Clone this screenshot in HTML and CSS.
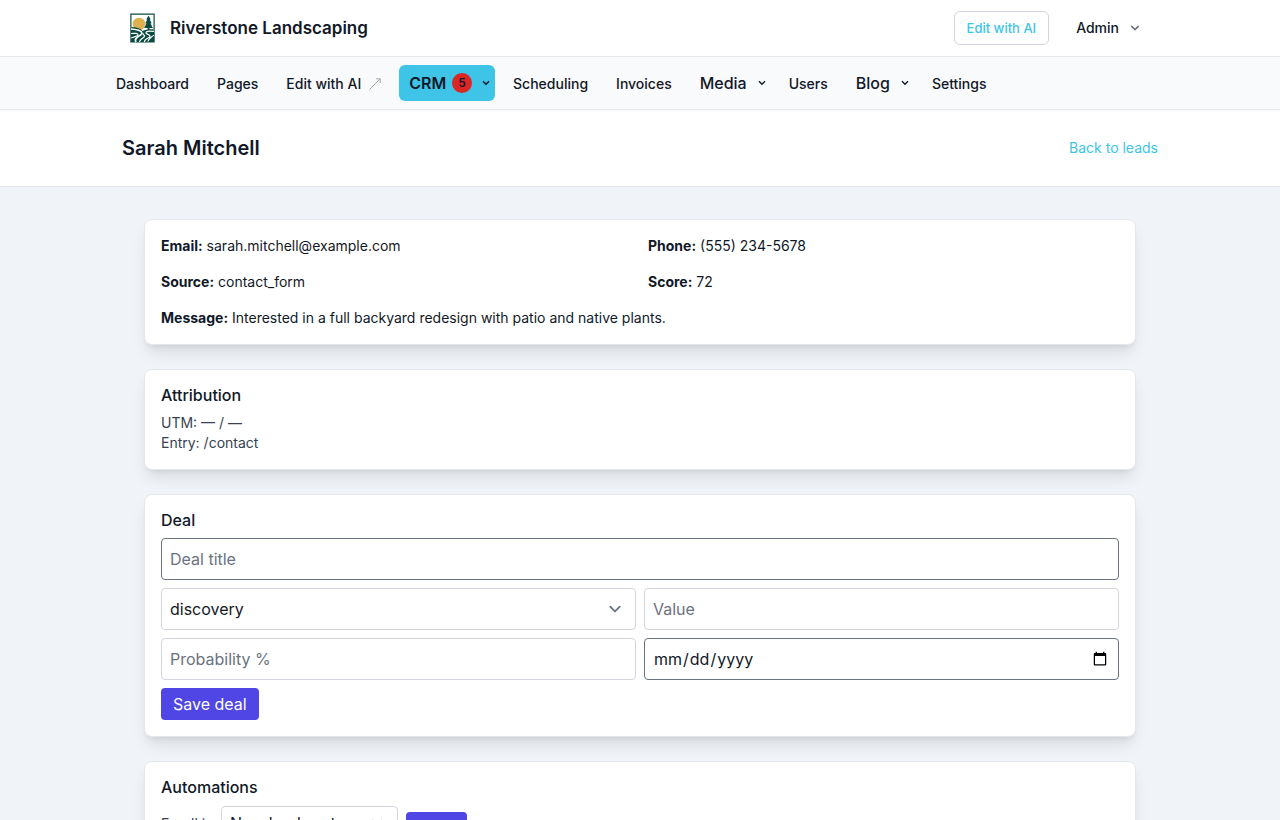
FILE: index.html
```html
<!DOCTYPE html>
<html lang="en">
<head>
    <meta charset="UTF-8">
    <meta name="viewport" content="width=device-width, initial-scale=1.0">
    <title>Sarah Mitchell - Riverstone Landscaping</title>
    <link rel="stylesheet" href="styles.css">
</head>
<body>
    <header class="topbar">
        <div class="brand">
            <svg class="logo" viewBox="0 0 25 30" width="25" height="30">
                <rect x=".3" y=".5" width="24.400" height="29" fill="#0b4a40"/>
                <path d="M1.500 1.700h22v17c-7 1-15-1-22-4z" fill="#fff"/>
                <circle cx="9" cy="11" r="6.300" fill="#deb04f"/>
                <path d="M1.500 14c5 0 9 1.500 11 4 3-1.500 7-2 11-1.500V29h-22z" fill="#0b4a40"/>
                <path d="M18.500 2.500l-2.200 4h1l-2 3.800h1.200l-2.300 4.700h3.400v4h1.800v-4h3.400l-2.300-4.700h1.200l-2-3.800h1z" fill="#0b4a40"/>
                <path d="M1 16c5 .3 9 1.500 10.500 3 1.500 2-2 3.500-4.500 5.500-2 1.500-2 3-1 4.500" fill="none" stroke="#fff" stroke-width="1.600"/>
                <path d="M1 20.500c4-.5 7 0 7 1.200S4.500 24 1 25M24 18.500c-5-.8-8.500 0-8 1.500s4.500 1.500 4 3.500-6 2-5.500 5.500M13 20c-1 2 3 2 1 4s-4 2-4.500 5M24 22.500c-1.500 0-2 1-3 2s-3 2-3 4" fill="none" stroke="#fff" stroke-width="1.200"/>
            </svg>
            <span class="brand-name">Riverstone Landscaping</span>
        </div>
        <div class="account">
            <a href="#" class="ai-button">Edit with AI</a>
            <button class="admin">Admin
                <svg width="16" height="16" viewBox="0 0 20 20" fill="#6b7280"><path d="M5.293 7.293a1 1 0 011.414 0L10 10.586l3.293-3.293a1 1 0 111.414 1.414l-4 4a1 1 0 01-1.414 0l-4-4a1 1 0 010-1.414z"/></svg>
            </button>
        </div>
    </header>

    <nav class="nav">
        <a href="#">Dashboard</a>
        <a href="#">Pages</a>
        <a href="#" class="external">Edit with AI
            <svg width="12" height="12" viewBox="0 0 12 12" fill="none" stroke="#8b929c" stroke-width=".8"><path d="M.5 11.500L11 1M7 .8h4.200V5"/></svg>
        </a>
        <a href="#" class="menu active">CRM <span class="badge">5</span>
            <svg width="8" height="6" viewBox="0 0 8 6"><path d="M1 1.300l3 3 3-3"/></svg>
        </a>
        <a href="#" class="scheduling">Scheduling</a>
        <a href="#">Invoices</a>
        <a href="#" class="menu">Media
            <svg width="8" height="6" viewBox="0 0 8 6"><path d="M1 1.300l3 3 3-3"/></svg>
        </a>
        <a href="#">Users</a>
        <a href="#" class="menu">Blog
            <svg width="8" height="6" viewBox="0 0 8 6"><path d="M1 1.300l3 3 3-3"/></svg>
        </a>
        <a href="#">Settings</a>
    </nav>

    <div class="page-header">
        <h1>Sarah Mitchell</h1>
        <a href="#">Back to leads</a>
    </div>

    <main>
        <section class="card details">
            <div><strong>Email:</strong> sarah.mitchell@example.com</div>
            <div><strong>Phone:</strong> (555) 234-5678</div>
            <div><strong>Source:</strong> contact_form</div>
            <div><strong>Score:</strong> 72</div>
            <div class="wide"><strong>Message:</strong> Interested in a full backyard redesign with patio and native plants.</div>
        </section>

        <section class="card">
            <h2>Attribution</h2>
            <div class="attribution">
                <div>UTM: — / —</div>
                <div>Entry: /contact</div>
            </div>
        </section>

        <section class="card">
            <h2>Deal</h2>
            <form class="deal-form">
                <input class="field dark wide" placeholder="Deal title">
                <select class="field"><option>discovery</option></select>
                <input class="field" type="number" placeholder="Value">
                <input class="field" type="number" placeholder="Probability %">
                <input class="field dark" type="date">
                <button type="button" class="primary">Save deal</button>
            </form>
        </section>

        <section class="card">
            <h2>Automations</h2>
            <form class="enroll-form">
                <label>Enroll in</label>
                <select class="field"><option>New lead nurture</option></select>
                <button type="button" class="primary small">Enroll</button>
            </form>
        </section>
    </main>
</body>
</html>
```
FILE: styles.css
```css
* {
    box-sizing: border-box;
}
body {
    margin: 0;
    height: 820px;
    overflow: hidden;
    background-color: #f0f4f8;
    color: #111827;
    font-family: Inter, sans-serif;
    font-size: 16px;
    line-height: 24px;
}
a {
    color: inherit;
    text-decoration: none;
}
button, input, select {
    font: inherit;
    color: inherit;
}
h1, h2 {
    margin: 0;
}
.topbar {
    display: flex;
    justify-content: space-between;
    align-items: center;
    height: 57px;
    padding: 0 137px 0 129.5px;
    background: white;
    border-bottom: 1px solid #e5e7eb;
}
.brand, .account {
    display: flex;
    align-items: center;
}
.brand {
    gap: 15.5px;
}
.brand-name {
    font-size: 17px;
    font-weight: 600;
}
.ai-button {
    height: 34px;
    padding: 0 12px;
    border: 1px solid #d1d5db;
    border-radius: 6px;
    color: #3dc4e7;
    font-size: 13px;
    font-weight: 500;
    line-height: 32px;
}
.admin {
    display: flex;
    align-items: center;
    gap: 8px;
    margin-left: 27px;
    padding: 0;
    border: none;
    background: none;
    font-size: 14px;
    font-weight: 500;
}
.nav {
    display: flex;
    align-items: center;
    gap: 28px;
    height: 53px;
    padding: 1px 116px 0;
    background: #f9fafc;
    border-bottom: 1px solid #e5e7eb;
    font-size: 14px;
    font-weight: 500;
}
.nav a {
    white-space: nowrap;
}
.nav .external {
    display: flex;
    align-items: center;
    gap: 8px;
}
.nav .menu {
    display: flex;
    align-items: center;
    gap: 11px;
    margin-right: -5px;
    padding-bottom: 2px;
    font-size: 16px;
}
.menu svg {
    fill: none;
    stroke: #111827;
    stroke-width: 1.4;
}
.nav .active {
    gap: 6px;
    height: 36px;
    margin: -2px 0 0 -10px;
    padding: 0 5px 0 10px;
    border-radius: 6px;
    background: #3dc4e7;
    font-weight: 600;
}
.active svg {
    margin-left: 4px;
}
.nav .scheduling {
    margin-left: -9.7px;
}
.badge {
    width: 19.5px;
    height: 20px;
    border-radius: 50%;
    background: #dc2626;
    font-size: 12px;
    line-height: 20px;
    text-align: center;
}
.page-header {
    display: flex;
    justify-content: space-between;
    align-items: center;
    height: 77px;
    padding: 0 122px;
    background: linear-gradient(#f5f5f6, white 2px);
    border-bottom: 1px solid #e5e7eb;
}
.page-header h1 {
    font-size: 20px;
    font-weight: 600;
}
.page-header a {
    color: #3dc4e7;
    font-size: 14px;
}
main {
    display: grid;
    gap: 24px;
    width: 992px;
    margin: 32px auto 0;
}
.card {
    padding: 16px;
    border: 1px solid #e5e7eb;
    border-radius: 8px;
    background: white;
    box-shadow: 0 10px 15px -3px rgba(0, 0, 0, 0.1), 0 4px 6px -4px rgba(0, 0, 0, 0.1);
}
.card h2 {
    margin-bottom: 8px;
    font-size: 16px;
    font-weight: 500;
    line-height: 1.2;
}
.details {
    display: grid;
    grid-template-columns: 1fr 1fr;
    gap: 16px;
    font-size: 14px;
    line-height: 20px;
}
.wide {
    grid-column: span 2;
}
.attribution {
    color: #374151;
    font-size: 14px;
    line-height: 20px;
}
.deal-form {
    display: grid;
    grid-template-columns: 1fr 1fr;
    gap: 8px;
}
.field {
    width: 100%;
    height: 42px;
    padding: 8px;
    border: 1px solid #d1d5db;
    border-radius: 4px;
    background: white;
}
.field.dark {
    border-color: #6b7280;
}
.field::placeholder {
    color: #6b7280;
}
select.field {
    appearance: none;
    background: white url("data:image/svg+xml,%3Csvg xmlns='http://www.w3.org/2000/svg' viewBox='0 0 20 20' fill='none'%3E%3Cpath stroke='%236b7280' stroke-width='1.5' stroke-linecap='round' stroke-linejoin='round' d='M6 8l4 4 4-4'/%3E%3C/svg%3E") no-repeat right 8px center / 24px;
}
.primary {
    justify-self: start;
    height: 32px;
    padding: 4px 12px;
    border: none;
    border-radius: 4px;
    background: #4f46e5;
    color: white;
}
.enroll-form {
    display: flex;
    align-items: center;
    gap: 8px;
    font-size: 14px;
}
.enroll-form label {
    width: 52px;
    padding-top: 2px;
    color: #374151;
    white-space: nowrap;
}
.enroll-form .field {
    width: 177px;
    height: 34px;
    padding: 4px 8px;
    font-size: 16px;
}
.enroll-form .small {
    align-self: flex-start;
    width: 61px;
    height: 28px;
    margin-top: 6px;
    padding: 4px 0;
    line-height: 20px;
}
```
